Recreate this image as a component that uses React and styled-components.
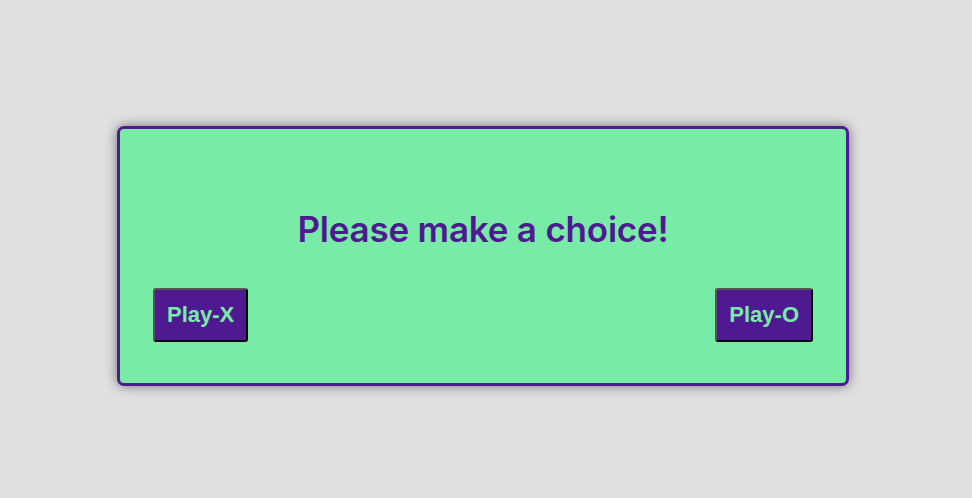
import React from 'react';
import styled, { createGlobalStyle } from 'styled-components';

const GlobalStyle = createGlobalStyle`
  html, body {
    margin: 0;
    padding: 0;
    background-color: #e0e0e0;
  }
`;

const Page = styled.div`
  min-height: 498px;
  box-sizing: border-box;
  padding: 126px 6px 0 0;
  display: flex;
  justify-content: center;
  align-items: flex-start;
`;

const ChoiceCard = styled.div`
  width: 732px;
  height: 260px;
  box-sizing: border-box;
  background-color: #78eca6;
  border: 3px solid #4f1a91;
  border-radius: 7px;
  box-shadow: 0 0 12px rgba(0, 0, 0, 0.5);
  padding: 0 33px 41px;
  display: flex;
  flex-direction: column;
  justify-content: flex-end;
`;

const Title = styled.h1`
  margin: 0 0 39px;
  text-align: center;
  font-family: Inter, "Noto Sans", sans-serif;
  font-size: 35px;
  font-weight: 600;
  line-height: 40px;
  letter-spacing: -0.2px;
  color: #4f1a91;
`;

const ButtonRow = styled.div`
  display: flex;
  justify-content: space-between;
  align-items: center;
`;

const PlayButton = styled.button`
  background-color: #4f1a91;
  color: #78eca6;
  font-family: "Liberation Sans", Arial, sans-serif;
  font-size: 22px;
  font-weight: 700;
  line-height: 26px;
  padding: 12px 12px;
  border: 2px outset #555;
  border-right-color: #111;
  border-bottom-color: #111;
  border-radius: 3px;
  cursor: pointer;
`;

export default function App() {
  return (
    <>
      <GlobalStyle />
      <Page>
        <ChoiceCard>
          <Title>Please make a choice!</Title>
          <ButtonRow>
            <PlayButton type="button">Play-X</PlayButton>
            <PlayButton type="button">Play-O</PlayButton>
          </ButtonRow>
        </ChoiceCard>
      </Page>
    </>
  );
}
